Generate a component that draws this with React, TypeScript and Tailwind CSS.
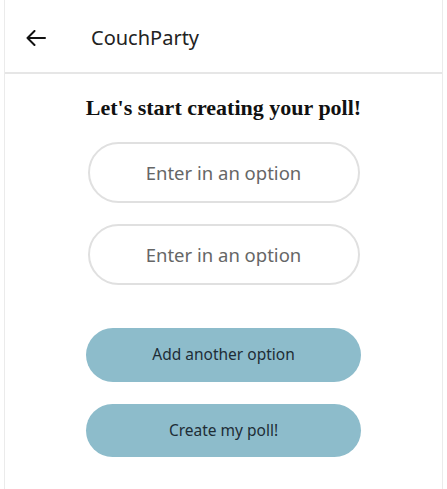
export default function App() {
  return (
    <div className="min-h-[489px] bg-white font-['Noto_Sans',sans-serif]">
      <div className="mx-[4px] min-h-[489px] border-x border-[#ebebeb]">
        <header className="h-[74px] pt-[3px] flex items-center border-b-2 border-[#e6e6e6]">
          <svg width="20" height="16" viewBox="0 0 20 16" className="ml-[21px] text-[#111]" fill="none" stroke="currentColor" strokeWidth="2" strokeLinecap="round" strokeLinejoin="round">
            <path d="M19 8H1.5M8.5 1L1.5 8l7 7" />
          </svg>
          <h1 className="ml-[45px] text-[20px] text-[#222] leading-none">CouchParty</h1>
        </header>

        <main className="flex flex-col items-center">
          <h2 className="mt-[22px] font-['Liberation_Serif',serif] font-bold text-[22px] text-[#111] leading-[24px]">
            Let's start creating your poll!
          </h2>

          <input
            type="text"
            placeholder="Enter in an option"
            className="mt-[22px] w-[272px] h-[61px] rounded-full border-2 border-[#e0e0e0] text-center text-[18.5px] placeholder:text-[#666] outline-none"
          />
          <input
            type="text"
            placeholder="Enter in an option"
            className="mt-[21px] w-[272px] h-[61px] rounded-full border-2 border-[#e0e0e0] text-center text-[18.5px] placeholder:text-[#666] outline-none"
          />

          <button className="mt-[43px] w-[275px] h-[54px] rounded-full bg-[#8dbccb] text-[#1e2d36] text-[15.5px]">
            Add another option
          </button>
          <button className="mt-[22px] w-[275px] h-[53px] rounded-full bg-[#8dbccb] text-[#1e2d36] text-[15.5px]">
            Create my poll!
          </button>
        </main>
      </div>
    </div>
  );
}
